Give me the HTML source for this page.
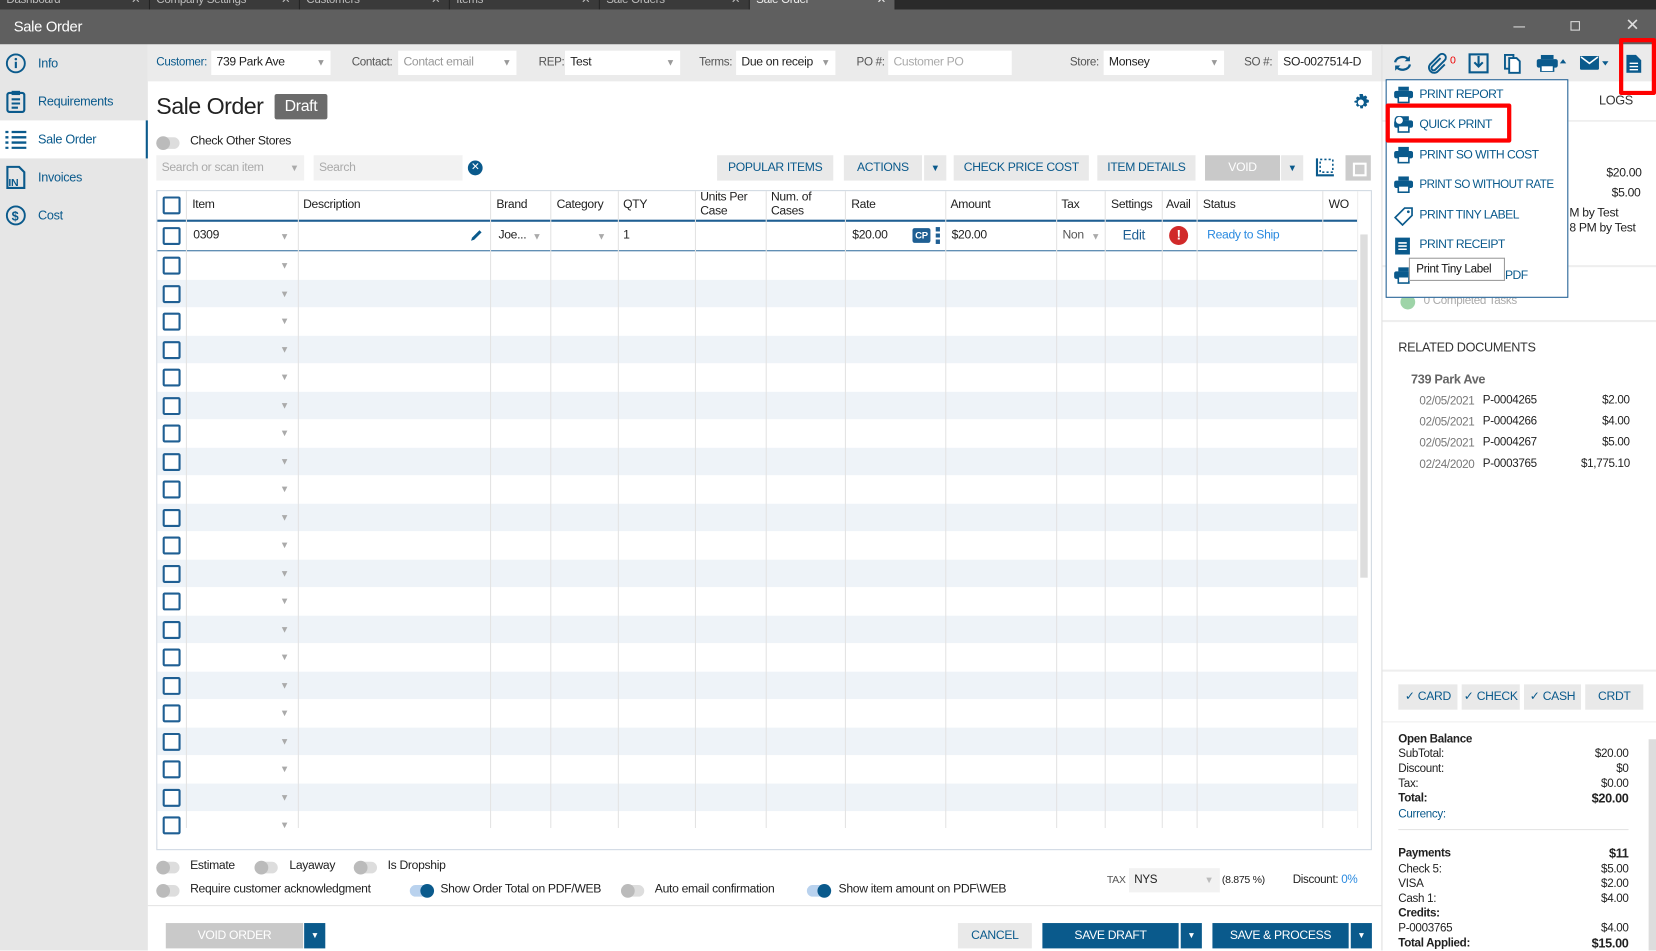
<!DOCTYPE html>
<html><head><meta charset="utf-8">
<style>
*{box-sizing:border-box;margin:0;padding:0}
html,body{width:1656px;height:950px;overflow:hidden;background:#fff}
body{font-family:"Liberation Sans",sans-serif;font-size:12px;color:#222;letter-spacing:-0.3px}
#w{position:absolute;left:0;top:0;width:1568px;height:900px;transform:scale(1.05612);transform-origin:0 0;overflow:hidden}
.a{position:absolute;white-space:nowrap}
.tab{position:absolute;top:0;height:9px;background:#3a3a3a;color:#bbb;font-size:11px;line-height:0px;padding-left:6px;border-right:1px solid #222;overflow:hidden}
.side{position:absolute;left:0;width:140px;height:36px;display:flex;align-items:center;color:#0a5a8c;font-size:12px}
.side svg{position:absolute;left:5px}
.side span{position:absolute;left:36px}
.lbl{position:absolute;top:53px;font-size:11px;color:#555}
.inp{position:absolute;top:48px;height:23px;background:#fff;font-size:11.5px;line-height:23px;padding-left:5px;color:#222;white-space:nowrap}
.inp .c{position:absolute;right:5px;top:0;color:#999;font-size:9px}
.btn{position:absolute;top:147px;height:24px;background:#e9e9e9;color:#0a5a8c;font-size:11.5px;line-height:24px;text-align:center;white-space:nowrap}
.cb{position:absolute;left:154px;width:17px;height:17px;border:2px solid #1f5f93;border-radius:2px;background:#fff}
.dd{position:absolute;left:265px;color:#aaa;font-size:9px}
.row{position:absolute;left:149px;width:1136px;height:26.5px}
.vl{position:absolute;top:181px;width:1px;height:603px;background:#e3e3e3}
.th{position:absolute;top:187px;font-size:11.5px;color:#222;line-height:13px;white-space:nowrap}
.tg{position:absolute;width:22px;height:11px;border-radius:6px;background:#ddd}
.tg:before{content:"";position:absolute;left:0;top:-1px;width:13px;height:13px;border-radius:50%;background:#bbb}
.tg.on{background:#b9d2ee}.tg.on:before{left:10px;background:#0a5a8c}
.tl{position:absolute;font-size:11.5px;color:#222;white-space:nowrap}
.mi{position:absolute;left:1320px;height:28px;width:162px;color:#0a5a8c;font-size:11.5px;line-height:28px;white-space:nowrap;letter-spacing:-0.5px}
.mi span{position:absolute;left:24px}
.mi svg{position:absolute;left:0;top:6px}
.pb{position:absolute;top:648px;height:24px;background:#e9e9e9;color:#0a5a8c;font-size:11.5px;line-height:24px;text-align:center;white-space:nowrap}
.sr{position:absolute;left:1324px;width:218px;font-size:11px;height:14px;line-height:14px}
.sr b{font-weight:bold}
.sr i{font-style:normal;position:absolute;right:0}
.rd{position:absolute;font-size:11px}
</style></head><body><div id="w">
<div class="a" style="left:0;top:0;width:1568px;height:9px;background:#2a2a2a"></div>
<div class="tab" style="left:0;width:142px">Dashboard<span style="position:absolute;right:8px">✕</span></div>
<div class="tab" style="left:142px;width:142px">Company Settings<span style="position:absolute;right:8px">✕</span></div>
<div class="tab" style="left:284px;width:142px">Customers<span style="position:absolute;right:8px">✕</span></div>
<div class="tab" style="left:426px;width:142px">Items<span style="position:absolute;right:8px">✕</span></div>
<div class="tab" style="left:568px;width:142px">Sale Orders<span style="position:absolute;right:8px">✕</span></div>
<div class="tab" style="left:710px;width:138px;background:#606060;color:#eee">Sale Order<span style="position:absolute;right:8px">✕</span></div>
<div class="a" style="left:0;top:9px;width:1568px;height:33px;background:#5f5f5f"></div>
<div class="a" style="left:13px;top:17px;color:#fff;font-size:14px">Sale Order</div>
<div class="a" style="left:1433px;top:25px;width:11px;height:1px;background:#ddd"></div>
<div class="a" style="left:1487px;top:20px;width:9px;height:9px;border:1px solid #ddd"></div>
<div class="a" style="left:1539px;top:14px;color:#ddd;font-size:16px">✕</div>
<div class="a" style="left:0;top:42px;width:140px;height:858px;background:#e6e6e6"></div>
<div class="side" style="top:42px"><svg width="20" height="20" viewBox="0 0 20 20"><circle cx="10" cy="10" r="8.5" fill="none" stroke="#0a5a8c" stroke-width="1.8"/><rect x="9" y="8.5" width="2" height="6" fill="#0a5a8c"/><circle cx="10" cy="6" r="1.2" fill="#0a5a8c"/></svg><span>Info</span></div>
<div class="side" style="top:78px"><svg width="20" height="22" viewBox="0 0 20 22"><rect x="2" y="3" width="16" height="18" rx="2" fill="none" stroke="#0a5a8c" stroke-width="2"/><rect x="6" y="1" width="8" height="4" fill="#0a5a8c"/><path d="M6 9h8M6 13h8M6 17h6" stroke="#0a5a8c" stroke-width="2"/></svg><span>Requirements</span></div>
<div class="side" style="top:114px;background:#fff;border-right:2px solid #0a5a8c"><svg width="20" height="18" viewBox="0 0 20 18"><path d="M0 2h3M6 2h14M0 7h3M6 7h14M0 12h3M6 12h14M0 17h3M6 17h14" stroke="#0a5a8c" stroke-width="2.2"/></svg><span>Sale Order</span></div>
<div class="side" style="top:150px"><svg width="20" height="22" viewBox="0 0 20 22"><path d="M2 1h11l5 5v15H2z" fill="none" stroke="#0a5a8c" stroke-width="2"/><text x="3" y="19" font-size="10" font-weight="bold" fill="#0a5a8c" font-family="Liberation Sans">IN</text></svg><span>Invoices</span></div>
<div class="side" style="top:186px"><svg width="20" height="20" viewBox="0 0 20 20"><circle cx="10" cy="10" r="8.5" fill="none" stroke="#0a5a8c" stroke-width="1.8"/><text x="6" y="15" font-size="12" font-weight="bold" fill="#0a5a8c" font-family="Liberation Sans">$</text></svg><span>Cost</span></div>
<div class="a" style="left:140px;top:42px;width:1428px;height:35px;background:#ebebeb"></div>
<div class="lbl" style="left:148px;color:#0a5a8c">Customer:</div>
<div class="inp" style="left:200px;width:113px">739 Park Ave<span class="c">▼</span></div>
<div class="lbl" style="left:333px">Contact:</div>
<div class="inp" style="left:377px;width:112px;color:#999">Contact email<span class="c">▼</span></div>
<div class="lbl" style="left:510px">REP:</div>
<div class="inp" style="left:535px;width:109px">Test<span class="c">▼</span></div>
<div class="lbl" style="left:662px">Terms:</div>
<div class="inp" style="left:697px;width:94px;overflow:hidden">Due on receip<span class="c" style="background:#fff;padding-left:3px">▼</span></div>
<div class="lbl" style="left:811px">PO #:</div>
<div class="inp" style="left:841px;width:117px;color:#aaa">Customer PO</div>
<div class="lbl" style="left:1013px">Store:</div>
<div class="inp" style="left:1045px;width:114px">Monsey<span class="c">▼</span></div>
<div class="lbl" style="left:1178px">SO #:</div>
<div class="inp" style="left:1210px;width:89px">SO-0027514-D</div>
<div class="a" style="left:1308px;top:42px;width:1px;height:858px;background:#e0e0e0"></div>
<svg class="a" style="left:1318px;top:51px" width="20" height="18" viewBox="0 0 20 18"><path d="M3 8a7 6 0 0 1 13-2M17 10a7 6 0 0 1-13 2" fill="none" stroke="#0a5a8c" stroke-width="2.2"/><path d="M17 2v5h-5zM3 16v-5h5z" fill="#0a5a8c"/></svg>
<svg class="a" style="left:1350px;top:50px" width="20" height="20" viewBox="0 0 20 20"><path d="M14 5l-8 8a2 2 0 0 0 3 3l9-9a3.5 3.5 0 0 0-5-5l-9 9a5 5 0 0 0 7 7l7-7" fill="none" stroke="#0a5a8c" stroke-width="1.8"/></svg>
<div class="a" style="left:1373px;top:52px;color:#e00;font-size:10px">0</div>
<svg class="a" style="left:1390px;top:50px" width="20" height="20" viewBox="0 0 20 20"><rect x="1.5" y="1.5" width="17" height="17" fill="none" stroke="#0a5a8c" stroke-width="2"/><path d="M10 3v10M6 9l4 4 4-4" fill="none" stroke="#0a5a8c" stroke-width="2"/></svg>
<svg class="a" style="left:1423px;top:50px" width="18" height="20" viewBox="0 0 18 20"><path d="M2 2h8v13H2z" fill="none" stroke="#0a5a8c" stroke-width="1.8"/><path d="M6 5h7l3 3v11H6z" fill="#fff" stroke="#0a5a8c" stroke-width="1.8"/></svg>
<svg class="a" style="left:1455px;top:52px" width="30" height="16" viewBox="0 0 30 16"><rect x="4" y="0" width="12" height="4" fill="#0a5a8c"/><rect x="0" y="4" width="20" height="8" rx="2" fill="#0a5a8c"/><rect x="4" y="10" width="12" height="6" fill="#fff" stroke="#0a5a8c" stroke-width="1.5"/><path d="M22 8l3-4 3 4z" fill="#0a5a8c"/></svg>
<svg class="a" style="left:1496px;top:53px" width="30" height="14" viewBox="0 0 30 14"><rect x="0" y="0" width="18" height="13" rx="1" fill="#0a5a8c"/><path d="M1 1l8 6 8-6" fill="none" stroke="#fff" stroke-width="1.5"/><path d="M21 5l3 4 3-4z" fill="#0a5a8c"/></svg>
<svg class="a" style="left:1539px;top:51px" width="16" height="18" viewBox="0 0 16 18"><path d="M1 1h9l5 5v12H1z" fill="#0a5a8c"/><path d="M4 9h8M4 12h8M4 15h8" stroke="#fff" stroke-width="1.3"/></svg>
<div class="a" style="left:1533px;top:36px;width:35px;height:54px;border:4px solid #f00;border-radius:2px"></div>
<div class="a" style="left:148px;top:88px;font-size:22px;color:#222;letter-spacing:-0.5px">Sale Order</div>
<div class="a" style="left:260px;top:89px;width:50px;height:24px;background:#6b6b6b;color:#fff;font-size:15px;line-height:24px;text-align:center;border-radius:2px">Draft</div>
<svg class="a" style="left:1279px;top:88px" width="19" height="19" viewBox="0 0 20 20"><path d="M10 1l2 0 .6 2.6 2-1 1.8 1.4-1 2.2 2.6.8v2.4l-2.6.6 1 2.2-1.8 1.6-2-1.2-.6 2.8h-2.4l-.6-2.8-2.2 1.2-1.6-1.6 1-2.2-2.6-.6V8l2.6-.8-1-2.2 1.6-1.4 2.2 1L8.6 1z" fill="#0a5a8c"/><circle cx="10" cy="9.5" r="3" fill="#fff"/></svg>
<div class="tg" style="left:148px;top:130px"></div>
<div class="tl" style="left:180px;top:128px">Check Other Stores</div>
<div class="a" style="left:148px;top:147px;width:140px;height:24px;background:#f2f2f2;color:#aaa;font-size:11.5px;line-height:24px;padding-left:5px">Search or scan item<span style="position:absolute;right:5px;font-size:9px">▼</span></div>
<div class="a" style="left:297px;top:147px;width:141px;height:24px;background:#f2f2f2;color:#aaa;font-size:11.5px;line-height:24px;padding-left:5px">Search</div>
<div class="a" style="left:443px;top:152px;width:14px;height:14px;border-radius:50%;background:#0a5a8c;color:#fff;font-size:10px;line-height:14px;text-align:center">✕</div>
<div class="btn" style="left:679px;width:110px">POPULAR ITEMS</div>
<div class="btn" style="left:799px;width:74px">ACTIONS</div>
<div class="btn" style="left:875px;width:21px;font-size:9px">▼</div>
<div class="btn" style="left:903px;width:128px">CHECK PRICE COST</div>
<div class="btn" style="left:1039px;width:93px">ITEM DETAILS</div>
<div class="btn" style="left:1141px;width:71px;background:#c9c9c9;color:#fff">VOID</div>
<div class="btn" style="left:1213px;width:21px;font-size:9px">▼</div>
<svg class="a" style="left:1244px;top:149px" width="20" height="20" viewBox="0 0 20 20"><path d="M3 1v16h16" fill="none" stroke="#0a5a8c" stroke-width="2"/><path d="M6 2h12v12H6z" fill="none" stroke="#0a5a8c" stroke-width="1.5" stroke-dasharray="2 2"/></svg>
<div class="a" style="left:1274px;top:147px;width:24px;height:24px;background:#ccc"><div style="position:absolute;left:7px;top:7px;width:13px;height:13px;border:2px solid #fff"></div></div>
<div class="a" style="left:148px;top:180px;width:1151px;height:625px;border:1px solid #cfd8e2"></div>
<div class="a" style="left:149px;top:208px;width:1136px;height:2px;background:#1f5f93"></div>
<div class="a" style="left:149px;top:237px;width:1136px;height:1px;background:#1f5f93"></div>
<div id="rows"></div>
<div class="vl" style="left:176px"></div><div class="vl" style="left:282px"></div><div class="vl" style="left:464px"></div><div class="vl" style="left:521px"></div><div class="vl" style="left:585px"></div><div class="vl" style="left:658px"></div><div class="vl" style="left:725px"></div><div class="vl" style="left:800px"></div><div class="vl" style="left:895px"></div><div class="vl" style="left:1000px"></div><div class="vl" style="left:1046px"></div><div class="vl" style="left:1100px"></div><div class="vl" style="left:1133px"></div><div class="vl" style="left:1252px"></div><div class="vl" style="left:1285px;background:#eee"></div>
<div class="a" style="left:1288px;top:222px;width:7px;height:325px;background:#ddd"></div>
<div class="cb" style="top:186px"></div>
<div class="th" style="left:182px;top:188px">Item</div><div class="th" style="left:287px;top:188px">Description</div><div class="th" style="left:470px;top:188px">Brand</div><div class="th" style="left:527px;top:188px">Category</div><div class="th" style="left:590px;top:188px">QTY</div><div class="th" style="left:663px;top:181px">Units Per<br>Case</div><div class="th" style="left:730px;top:181px">Num. of<br>Cases</div><div class="th" style="left:806px;top:188px">Rate</div><div class="th" style="left:900px;top:188px">Amount</div><div class="th" style="left:1005px;top:188px">Tax</div><div class="th" style="left:1052px;top:188px">Settings</div><div class="th" style="left:1104px;top:188px">Avail</div><div class="th" style="left:1139px;top:188px">Status</div><div class="th" style="left:1258px;top:188px">WO</div>
<div class="cb" style="top:215px"></div>
<div class="tl" style="left:183px;top:217px">0309</div><div class="dd" style="top:219px">▼</div>
<svg class="a" style="left:444px;top:216px" width="14" height="14" viewBox="0 0 14 14"><path d="M2 12l1-3 7-7 2 2-7 7z" fill="#0a5a8c"/></svg>
<div class="tl" style="left:472px;top:217px">Joe...</div><div class="a" style="left:504px;top:219px;color:#aaa;font-size:9px">▼</div>
<div class="a" style="left:565px;top:219px;color:#aaa;font-size:9px">▼</div>
<div class="tl" style="left:590px;top:217px">1</div>
<div class="tl" style="left:807px;top:217px">$20.00</div>
<div class="a" style="left:864px;top:216px;width:17px;height:14px;background:#1f5f93;color:#fff;font-size:9px;font-weight:bold;line-height:14px;text-align:center;border-radius:2px">CP</div>
<div class="a" style="left:886px;top:215px;width:4px;height:16px;background:repeating-linear-gradient(#1f5f93 0 4px,transparent 4px 6px)"></div>
<div class="tl" style="left:901px;top:217px">$20.00</div>
<div class="tl" style="left:1006px;top:217px;color:#555">Non</div><div class="a" style="left:1033px;top:219px;color:#aaa;font-size:9px">▼</div>
<div class="a" style="left:1063px;top:215px;color:#1f5f93;font-size:13px">Edit</div>
<div class="a" style="left:1107px;top:214px;width:18px;height:18px;border-radius:50%;background:#d12a2a;color:#fff;font-weight:bold;font-size:13px;line-height:18px;text-align:center">!</div>
<div class="tl" style="left:1143px;top:217px;color:#2a8ae0">Ready to Ship</div>
<div class="tg" style="left:148px;top:816px"></div><div class="tl" style="left:180px;top:814px">Estimate</div>
<div class="tg" style="left:241px;top:816px"></div><div class="tl" style="left:274px;top:814px">Layaway</div>
<div class="tg" style="left:335px;top:816px"></div><div class="tl" style="left:367px;top:814px">Is Dropship</div>
<div class="tg" style="left:148px;top:838px"></div><div class="tl" style="left:180px;top:836px">Require customer acknowledgment</div>
<div class="tg on" style="left:388px;top:838px"></div><div class="tl" style="left:417px;top:836px">Show Order Total on PDF/WEB</div>
<div class="tg" style="left:588px;top:838px"></div><div class="tl" style="left:620px;top:836px">Auto email confirmation</div>
<div class="tg on" style="left:764px;top:838px"></div><div class="tl" style="left:794px;top:836px">Show item amount on PDF\WEB</div>
<div class="a" style="left:1048px;top:828px;font-size:10px;color:#555">TAX</div>
<div class="a" style="left:1069px;top:822px;width:86px;height:23px;background:#f2f2f2;font-size:11px;line-height:23px;padding-left:5px">NYS<span style="position:absolute;right:6px;color:#bbb;font-size:9px">▼</span></div>
<div class="a" style="left:1157px;top:828px;font-size:10px">(8.875 %)</div>
<div class="a" style="left:1224px;top:827px;font-size:11px">Discount: <span style="color:#2a8ae0">0%</span></div>
<div class="a" style="left:140px;top:857px;width:1168px;height:1px;background:#e4e4e4"></div>
<div class="a" style="left:157px;top:874px;width:130px;height:24px;background:#c9c9c9;color:#fff;font-size:11.5px;line-height:24px;text-align:center">VOID ORDER</div>
<div class="a" style="left:288px;top:874px;width:20px;height:24px;background:#0a5a8c;color:#fff;font-size:8px;line-height:24px;text-align:center">▼</div>
<div class="a" style="left:907px;top:874px;width:70px;height:24px;background:#e9e9e9;color:#0a5a8c;font-size:11.5px;line-height:24px;text-align:center">CANCEL</div>
<div class="a" style="left:987px;top:874px;width:129px;height:24px;background:#0a5a8c;color:#fff;font-size:11.5px;line-height:24px;text-align:center">SAVE DRAFT</div>
<div class="a" style="left:1118px;top:874px;width:20px;height:24px;background:#0a5a8c;color:#fff;font-size:8px;line-height:24px;text-align:center">▼</div>
<div class="a" style="left:1148px;top:874px;width:129px;height:24px;background:#0a5a8c;color:#fff;font-size:11.5px;line-height:24px;text-align:center">SAVE &amp; PROCESS</div>
<div class="a" style="left:1279px;top:874px;width:20px;height:24px;background:#0a5a8c;color:#fff;font-size:8px;line-height:24px;text-align:center">▼</div>
<div class="a" style="left:1514px;top:88px;font-size:12px;color:#333">LOGS</div>
<div class="a" style="left:1309px;top:114px;width:259px;height:1px;background:#e4e4e4"></div>
<div class="a" style="left:1521px;top:158px;font-size:11.5px">$20.00</div>
<div class="a" style="left:1526px;top:177px;font-size:11.5px">$5.00</div>
<div class="a" style="left:1486px;top:196px;font-size:11.5px">M by Test</div>
<div class="a" style="left:1486px;top:210px;font-size:11.5px">8 PM by Test</div>
<div class="a" style="left:1309px;top:251px;width:259px;height:2px;background:#eee"></div>
<div class="a" style="left:1326px;top:279px;width:14px;height:14px;border-radius:50%;background:#9ed4a8"></div>
<div class="a" style="left:1348px;top:279px;font-size:11px;color:#aaa">0 Completed Tasks</div>
<div class="a" style="left:1309px;top:303px;width:259px;height:2px;background:#eee"></div>
<div class="a" style="left:1324px;top:322px;font-size:12px;color:#333">RELATED DOCUMENTS</div>
<div class="a" style="left:1336px;top:352px;font-size:12px;color:#666;font-weight:bold">739 Park Ave</div>
<div class="rd" style="left:1344px;top:374px;color:#777">02/05/2021</div><div class="rd" style="left:1404px;top:373px">P-0004265</div><div class="rd" style="left:1517px;top:373px">$2.00</div>
<div class="rd" style="left:1344px;top:394px;color:#777">02/05/2021</div><div class="rd" style="left:1404px;top:393px">P-0004266</div><div class="rd" style="left:1517px;top:393px">$4.00</div>
<div class="rd" style="left:1344px;top:414px;color:#777">02/05/2021</div><div class="rd" style="left:1404px;top:413px">P-0004267</div><div class="rd" style="left:1517px;top:413px">$5.00</div>
<div class="rd" style="left:1344px;top:434px;color:#777">02/24/2020</div><div class="rd" style="left:1404px;top:433px">P-0003765</div><div class="rd" style="left:1497px;top:433px">$1,775.10</div>
<div class="a" style="left:1309px;top:634px;width:259px;height:2px;background:#eee"></div>
<div class="pb" style="left:1324px;width:56px">✓ CARD</div>
<div class="pb" style="left:1384px;width:55px">✓ CHECK</div>
<div class="pb" style="left:1443px;width:54px">✓ CASH</div>
<div class="pb" style="left:1501px;width:55px">CRDT</div>
<div class="a" style="left:1309px;top:683px;width:259px;height:1px;background:#eee"></div>
<div class="a" style="left:1561px;top:700px;width:7px;height:200px;background:#ddd"></div>
<div class="sr" style="top:693px"><b>Open Balance</b></div>
<div class="sr" style="top:707px">SubTotal:<i>$20.00</i></div>
<div class="sr" style="top:721px">Discount:<i>$0</i></div>
<div class="sr" style="top:735px">Tax:<i>$0.00</i></div>
<div class="sr" style="top:749px"><b>Total:</b><i><b style="font-size:12px">$20.00</b></i></div>
<div class="sr" style="top:764px;color:#0a5a8c">Currency:</div>
<div class="a" style="left:1324px;top:785px;width:218px;height:1px;background:#e4e4e4"></div>
<div class="sr" style="top:801px"><b>Payments</b><i><b style="font-size:12px">$11</b></i></div>
<div class="sr" style="top:816px">Check 5:<i>$5.00</i></div>
<div class="sr" style="top:830px">VISA<i>$2.00</i></div>
<div class="sr" style="top:844px">Cash 1:<i>$4.00</i></div>
<div class="sr" style="top:858px"><b>Credits:</b></div>
<div class="sr" style="top:872px">P-0003765<i>$4.00</i></div>
<div class="sr" style="top:886px"><b>Total Applied:</b><i><b style="font-size:12px">$15.00</b></i></div>
<div class="a" style="left:1312px;top:75px;width:173px;height:207px;background:#fff;border:1px solid #1f5f93"></div>
<div class="mi" style="top:76px"><svg width="18" height="16" viewBox="0 0 18 16"><rect x="4" y="0" width="10" height="4" fill="#0a5a8c"/><rect x="0" y="4" width="18" height="7" rx="2" fill="#0a5a8c"/><rect x="4" y="9" width="10" height="6" fill="#fff" stroke="#0a5a8c" stroke-width="1.5"/></svg><span>PRINT REPORT</span></div>
<div class="mi" style="top:104px"><svg width="18" height="16" viewBox="0 0 18 16"><rect x="4" y="0" width="10" height="4" fill="#0a5a8c"/><rect x="0" y="4" width="18" height="7" rx="2" fill="#0a5a8c"/><rect x="4" y="9" width="10" height="6" fill="#fff" stroke="#0a5a8c" stroke-width="1.5"/><circle cx="5" cy="4" r="4" fill="#fff" stroke="#0a5a8c" stroke-width="1.3"/></svg><span>QUICK PRINT</span></div>
<div class="a" style="left:1312px;top:98px;width:119px;height:37px;border:4px solid #f00;border-radius:2px"></div>
<div class="mi" style="top:133px"><svg width="18" height="16" viewBox="0 0 18 16"><rect x="4" y="0" width="10" height="4" fill="#0a5a8c"/><rect x="0" y="4" width="18" height="7" rx="2" fill="#0a5a8c"/><rect x="4" y="9" width="10" height="6" fill="#fff" stroke="#0a5a8c" stroke-width="1.5"/></svg><span>PRINT SO WITH COST</span></div>
<div class="mi" style="top:161px"><svg width="18" height="16" viewBox="0 0 18 16"><rect x="4" y="0" width="10" height="4" fill="#0a5a8c"/><rect x="0" y="4" width="18" height="7" rx="2" fill="#0a5a8c"/><rect x="4" y="9" width="10" height="6" fill="#fff" stroke="#0a5a8c" stroke-width="1.5"/></svg><span style="font-size:11px">PRINT SO WITHOUT RATE</span></div>
<div class="mi" style="top:190px"><svg width="18" height="18" viewBox="0 0 18 18"><path d="M10 1h7v7l-9 9-7-7z" fill="none" stroke="#0a5a8c" stroke-width="1.6"/><circle cx="13.5" cy="4.5" r="1.3" fill="#0a5a8c"/></svg><span>PRINT TINY LABEL</span></div>
<div class="mi" style="top:218px"><svg width="16" height="18" viewBox="0 0 16 18"><rect x="1" y="1" width="14" height="16" fill="#0a5a8c"/><path d="M4 6h8M4 9h8M4 12h8" stroke="#fff" stroke-width="1.5"/></svg><span>PRINT RECEIPT</span></div>
<div class="mi" style="top:247px"><svg width="18" height="16" viewBox="0 0 18 16"><rect x="4" y="0" width="10" height="4" fill="#0a5a8c"/><rect x="0" y="4" width="18" height="7" rx="2" fill="#0a5a8c"/><rect x="4" y="9" width="10" height="6" fill="#fff" stroke="#0a5a8c" stroke-width="1.5"/></svg><span>PRINT INVOICE PDF</span></div>
<div class="a" style="left:1334px;top:244px;width:91px;height:22px;background:#fff;border:1px solid #999;font-size:11px;line-height:20px;padding-left:6px;color:#111">Print Tiny Label</div>
</div>
<script>
var h='';for(var i=0;i<21;i++){var y=238+i*26.5;h+='<div class="row" style="top:'+y+'px;background:'+(i%2?'#eef3f8':'#fff')+'"></div>';if(y+5<790){h+='<div class="cb" style="top:'+(y+5)+'px"></div><div class="dd" style="top:'+(y+8)+'px">▼</div>';}}
document.getElementById('rows').innerHTML=h;
</script>
</body></html>
